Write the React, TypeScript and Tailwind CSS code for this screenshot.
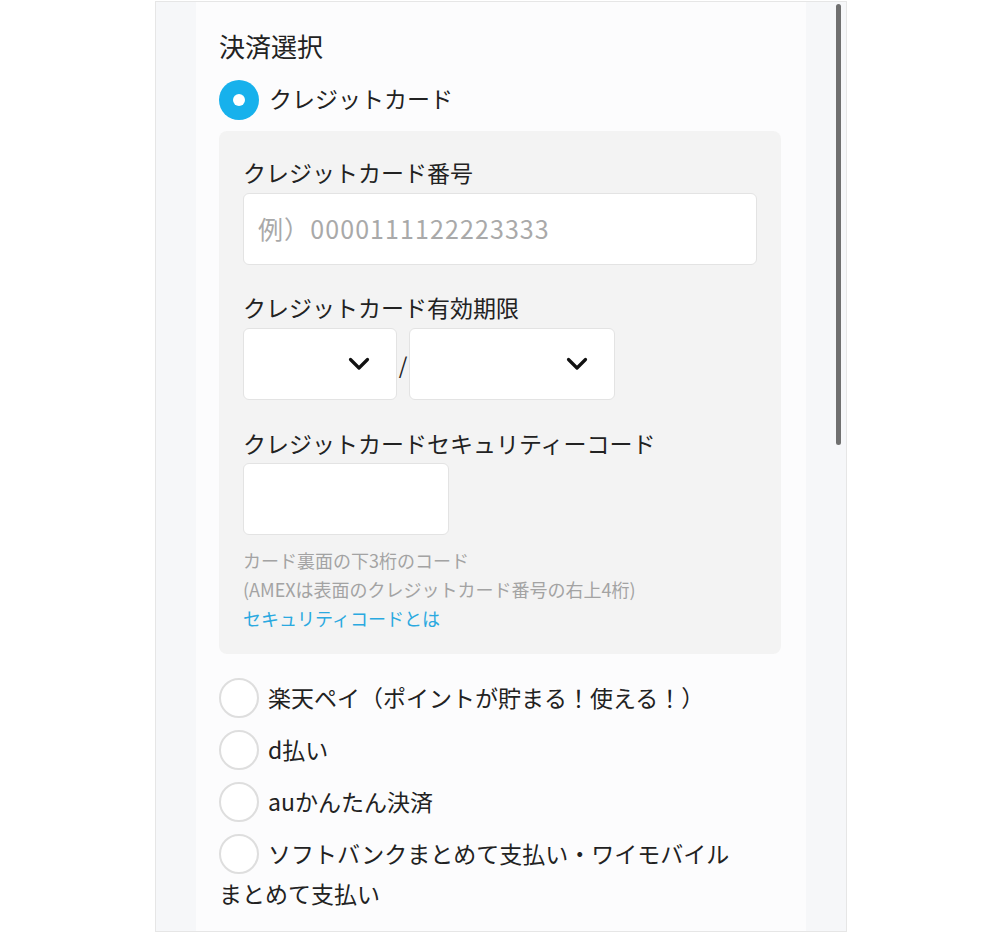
import React from 'react';

const FONT = { fontFamily: '"Noto Sans CJK JP", "Noto Sans", sans-serif' };

function Chevron() {
  return (
    <svg width="22" height="14" viewBox="0 0 22 14" fill="none">
      <path d="M2.5 2.5 L11 11 L19.5 2.5" stroke="#111" strokeWidth="3.2" strokeLinecap="round" strokeLinejoin="round" />
    </svg>
  );
}

function SelectBox({ width }: { width: string }) {
  return (
    <div className={`${width} h-[72px] bg-white border border-[#e3e3e3] rounded-[6px] flex items-center justify-end pr-[26px]`}>
      <Chevron />
    </div>
  );
}

function OptionRow({ label }: { label: string }) {
  return (
    <label className="block text-[23px] leading-[40px] text-[#222]">
      <span className="inline-block align-top w-10 h-10 rounded-full border-2 border-[#dedede] bg-white mr-[9px]" />
      <span className="relative top-[-1px]">{label}</span>
    </label>
  );
}

export default function App() {
  return (
    <div className="w-full h-[932px] bg-white pt-[1px]" style={FONT}>
      <div className="relative ml-[155px] w-[692px] h-[931px] border border-[#e6e6e6] flex overflow-hidden">
        <div className="w-[40px] bg-[#f6f7f9]" />

        <div className="w-[610px] bg-[#fcfcfd] pl-[23px] pr-[25px] pt-[26px]">
          <h1 className="text-[26px] leading-[36px] text-[#222] font-normal">決済選択</h1>

          <div className="mt-[16px] flex items-center h-10">
            <span className="w-10 h-10 rounded-full bg-[#17b1ec] flex items-center justify-center mr-[10px]">
              <span className="w-[12px] h-[12px] rounded-full bg-white" />
            </span>
            <span className="text-[23px] leading-[36px] text-[#222] relative top-[-2px]">クレジットカード</span>
          </div>

          <div className="mt-[11px] bg-[#f3f3f3] rounded-[8px] px-[24px] pt-[25px] pb-[21px]">
            <p className="text-[23px] leading-[32px] text-[#222]">クレジットカード番号</p>
            <div className="mt-[5px] h-[72px] bg-white border border-[#e3e3e3] rounded-[6px] flex items-center pl-[14px]">
              <span className="text-[25px] text-[#a9a9a9] tracking-[1.1px]">例）0000111122223333</span>
            </div>

            <p className="mt-[26px] text-[23px] leading-[32px] text-[#222]">クレジットカード有効期限</p>
            <div className="mt-[5px] flex items-center">
              <SelectBox width="w-[154px]" />
              <span className="w-[12px] text-center text-[22px] text-[#222]">/</span>
              <SelectBox width="w-[206px]" />
            </div>

            <p className="mt-[27px] text-[23px] leading-[32px] text-[#222]">クレジットカードセキュリティーコード</p>
            <div className="mt-[4px] w-[206px] h-[72px] bg-white border border-[#e3e3e3] rounded-[6px]" />

            <div className="mt-[11px] text-[18px] leading-[29px]">
              <p className="text-[#a3a3a3]">カード裏面の下3桁のコード</p>
              <p className="text-[#a3a3a3]">(AMEXは表面のクレジットカード番号の右上4桁)</p>
              <a className="text-[#2aa9e0]">セキュリティコードとは</a>
            </div>
          </div>

          <div className="mt-[24px] w-[525px] flex flex-col gap-[12px]">
            <OptionRow label="楽天ペイ（ポイントが貯まる！使える！）" />
            <OptionRow label="d払い" />
            <OptionRow label="auかんたん決済" />
            <OptionRow label="ソフトバンクまとめて支払い・ワイモバイルまとめて支払い" />
          </div>
        </div>

        <div className="flex-1 bg-[#f6f7f9]" />

        <div className="absolute right-[5px] top-[2px] w-[5px] h-[441px] rounded-full bg-[#707070]" />
      </div>
    </div>
  );
}
